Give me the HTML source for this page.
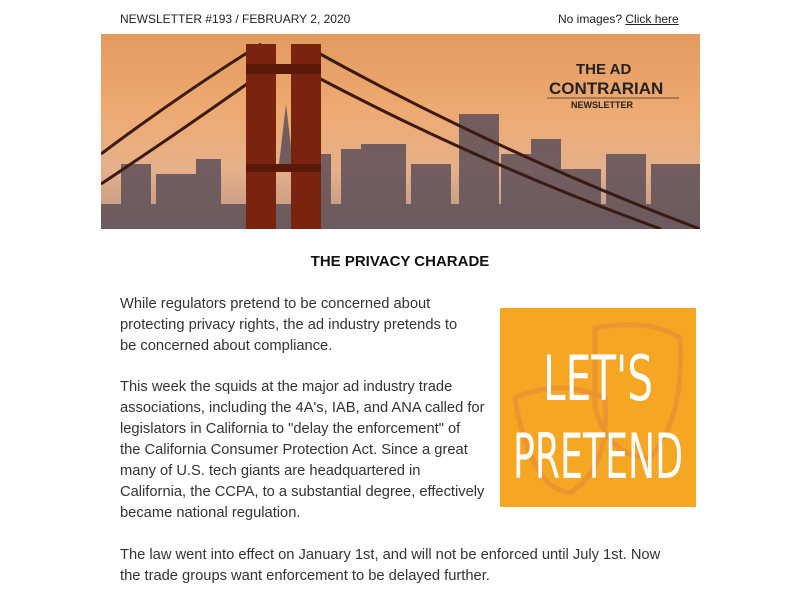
<!DOCTYPE html>
<html><head><meta charset="utf-8"><style>
body{margin:0;background:#fff;font-family:"Liberation Sans",sans-serif;color:#333;}
.top{position:absolute;top:12px;font-size:12px;color:#222}
.banner{position:absolute;left:101px;top:34px;width:599px;height:195px;overflow:hidden;
background:linear-gradient(#e39a60 0%,#eeaa72 40%,#e6b08a 70%,#b89484 100%);}
h1{position:absolute;top:253px;left:0;width:800px;text-align:center;font-size:15px;font-weight:bold;margin:0;color:#111}
.p{position:absolute;left:120px;font-size:14.7px;line-height:21px;color:#333}
.img{position:absolute;left:500px;top:308px;width:196px;height:199px;background:#f5a623;overflow:hidden}
</style></head><body>
<div class="top" style="left:120px">NEWSLETTER #193 / FEBRUARY 2, 2020</div>
<div class="top" style="left:558px">No images? <u>Click here</u></div>
<div class="banner">
<svg width="599" height="195" viewBox="0 0 599 195">
<g fill="#5e5058" opacity=".85">
<rect x="20" y="130" width="30" height="65"/><rect x="55" y="140" width="40" height="55"/>
<rect x="95" y="125" width="25" height="70"/><rect x="190" y="120" width="40" height="75"/>
<rect x="240" y="115" width="20" height="80"/><rect x="260" y="110" width="45" height="85"/>
<rect x="310" y="130" width="40" height="65"/><rect x="358" y="80" width="40" height="115"/>
<rect x="400" y="120" width="30" height="75"/><rect x="430" y="105" width="30" height="90"/>
<rect x="460" y="135" width="40" height="60"/><rect x="505" y="120" width="40" height="75"/>
<rect x="550" y="130" width="49" height="65"/><rect x="0" y="170" width="599" height="25"/>
<polygon points="178,130 185,70 192,130"/>
</g>
<g stroke="#3a1a12" stroke-width="3" fill="none">
<path d="M0 120 Q80 60 160 10"/><path d="M210 15 Q400 120 599 195"/>
<path d="M0 150 Q90 90 160 40"/><path d="M210 40 Q380 130 560 195"/>
</g>
<rect x="145" y="10" width="30" height="185" fill="#7a2410"/>
<rect x="190" y="10" width="30" height="185" fill="#7a2410"/>
<rect x="145" y="30" width="75" height="10" fill="#5a1a0a"/>
<rect x="145" y="130" width="75" height="8" fill="#5a1a0a"/>
<text x="475" y="40" font-family="Liberation Sans" font-weight="bold" font-size="15" fill="#222">THE AD</text>
<text x="448" y="60" font-family="Liberation Sans" font-weight="bold" font-size="17" fill="#222">CONTRARIAN</text>
<line x1="446" y1="64" x2="578" y2="64" stroke="#6a4a3a"/>
<text x="470" y="74" font-family="Liberation Sans" font-weight="bold" font-size="9" fill="#222">NEWSLETTER</text>
</svg>
</div>
<h1>THE PRIVACY CHARADE</h1>
<div class="p" style="top:294px">While regulators pretend to be concerned about<br>protecting privacy rights, the ad industry pretends to<br>be concerned about compliance.</div>
<div class="p" style="top:377px">This week the squids at the major ad industry trade<br>associations, including the 4A's, IAB, and ANA called for<br>legislators in California to "delay the enforcement" of<br>the California Consumer Protection Act. Since a great<br>many of U.S. tech giants are headquartered in<br>California, the CCPA, to a substantial degree, effectively<br>became national regulation.</div>
<div class="p" style="top:545px">The law went into effect on January 1st, and will not be enforced until July 1st. Now<br>the trade groups want enforcement to be delayed further.</div>
<div class="img">
<svg width="196" height="199">
<g fill="none" stroke="#ec9530" stroke-width="5">
<path d="M95 20 Q150 10 180 30 Q185 110 150 150 Q110 150 95 100Z"/>
<path d="M15 90 Q60 70 105 90 Q110 160 70 185 Q30 180 15 90Z"/>
</g>
<text x="98" y="92" text-anchor="middle" font-family="DejaVu Sans Condensed,sans-serif" font-size="62" fill="#fff" textLength="110" lengthAdjust="spacingAndGlyphs">LET'S</text>
<text x="98" y="170" text-anchor="middle" font-family="DejaVu Sans Condensed,sans-serif" font-size="62" fill="#fff" textLength="170" lengthAdjust="spacingAndGlyphs">PRETEND</text>
</svg>
</div>
</body></html>
